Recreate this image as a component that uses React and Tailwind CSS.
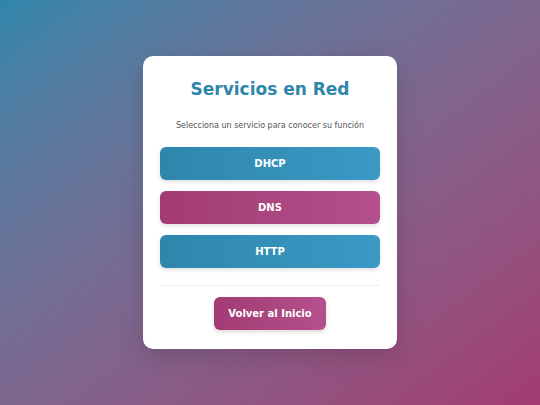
import React from "react";

const services = [
  { name: "DHCP", tone: "blue" },
  { name: "DNS", tone: "pink" },
  { name: "HTTP", tone: "blue" },
];

// Gradient fill per button tone
const toneClass = {
  blue: "bg-gradient-to-r from-[#2E86AB] to-[#3B99C6]",
  pink: "bg-gradient-to-r from-[#A23B72] to-[#B4508D]",
};

const App = () => {
  return (
    <div
      className="flex h-[405px] w-full items-center justify-center bg-gradient-to-br from-[#2E86AB] to-[#A23B72]"
      style={{ fontFamily: '"DejaVu Sans", Verdana, sans-serif' }}
    >
      <div className="w-[254px] rounded-[10px] bg-white px-[17px] pt-[21px] pb-[19px] shadow-[0_8px_24px_rgba(0,0,0,0.15)]">
        <h1 className="text-center text-[17px] leading-[24px] font-bold text-[#2E86AB]">
          Servicios en Red
        </h1>
        <p className="mt-[19px] text-center text-[8px] leading-[12px] text-[#555]">
          Selecciona un servicio para conocer su función
        </p>

        <div className="mt-[15px] flex flex-col gap-[11px]">
          {services.map((s) => (
            <button
              key={s.name}
              className={`h-[33px] w-full rounded-[6px] text-[10px] font-bold text-white shadow-[0_2px_4px_rgba(0,0,0,0.12)] ${toneClass[s.tone]}`}
            >
              {s.name}
            </button>
          ))}
        </div>

        <div className="mt-[17px] h-px bg-[#eee]" />

        <div className="mt-[11px] flex justify-center">
          <button className="h-[33px] w-[112px] rounded-[6px] bg-gradient-to-r from-[#A23B72] to-[#B4508D] text-[10px] font-bold text-white shadow-[0_2px_4px_rgba(0,0,0,0.15)]">
            Volver al Inicio
          </button>
        </div>
      </div>
    </div>
  );
};

export default App;
